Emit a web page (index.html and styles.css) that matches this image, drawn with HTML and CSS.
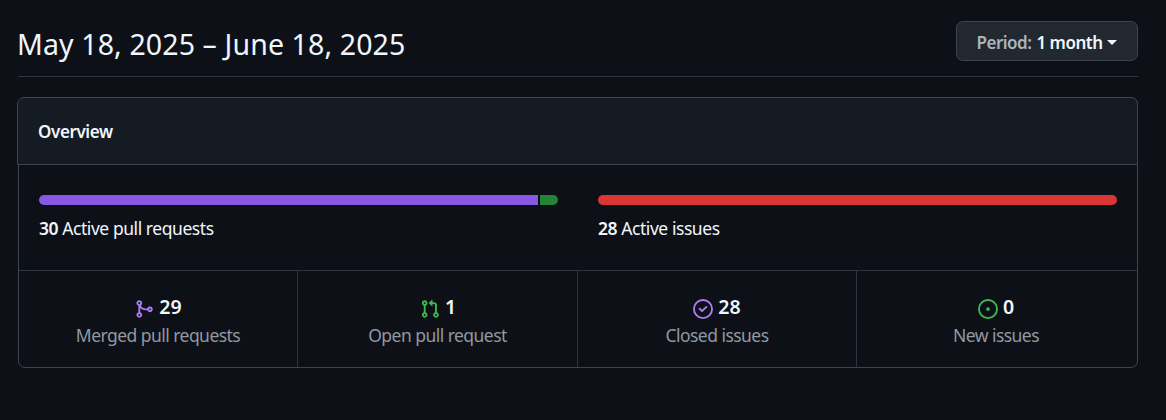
FILE: index.html
```html
<!DOCTYPE html>
<html lang="en">
<head>
<meta charset="utf-8">
<title>Pulse</title>
<link rel="stylesheet" href="styles.css">
</head>
<body>
<main class="page">
  <header class="head">
    <h1 class="title">May 18, 2025 – June 18, 2025</h1>
    <button class="period"><span class="period-label">Period:</span> <span class="period-value">1 month</span><span class="caret"></span></button>
  </header>
  <section class="box">
    <h2 class="box-head">Overview</h2>
    <div class="bars">
      <div class="col">
        <div class="bar"><span class="merged"></span><span class="open"></span></div>
        <p class="label"><b>30</b> Active pull requests</p>
      </div>
      <div class="col">
        <div class="bar"><span class="closed"></span></div>
        <p class="label"><b>28</b> Active issues</p>
      </div>
    </div>
    <ul class="stats">
      <li class="stat">
        <div class="num"><svg class="icon purple" viewBox="0 0 16 16"><path d="M5.45 5.154A4.25 4.25 0 0 0 9.25 7.5h1.378a2.251 2.251 0 1 1 0 1.5H9.25A5.734 5.734 0 0 1 5 7.123v3.505a2.25 2.25 0 1 1-1.5 0V5.372a2.25 2.25 0 1 1 1.95-.218ZM4.25 13.5a.75.75 0 1 0 0-1.5.75.75 0 0 0 0 1.5Zm8.5-4.5a.75.75 0 1 0 0-1.5.75.75 0 0 0 0 1.5ZM5 3.25a.75.75 0 1 0 0 .005V3.25Z"/></svg><b>29</b></div>
        <span class="cap">Merged pull requests</span>
      </li>
      <li class="stat">
        <div class="num num-wide"><svg class="icon green" viewBox="0 0 16 16"><path d="M1.5 3.25a2.25 2.25 0 1 1 3 2.122v5.256a2.251 2.251 0 1 1-1.5 0V5.372A2.25 2.25 0 0 1 1.5 3.25Zm5.677-.177L9.573.677A.25.25 0 0 1 10 .854V2.5h1A2.5 2.5 0 0 1 13.5 5v5.628a2.251 2.251 0 1 1-1.5 0V5a1 1 0 0 0-1-1h-1v1.646a.25.25 0 0 1-.427.177L7.177 3.427a.25.25 0 0 1 0-.354ZM3.75 2.5a.75.75 0 1 0 0 1.5.75.75 0 0 0 0-1.5Zm0 9.5a.75.75 0 1 0 0 1.5.75.75 0 0 0 0-1.5Zm8.25.75a.75.75 0 1 0 1.5 0 .75.75 0 0 0-1.5 0Z"/></svg><b>1</b></div>
        <span class="cap">Open pull request</span>
      </li>
      <li class="stat">
        <div class="num"><svg class="icon purple" viewBox="0 0 16 16"><path d="M11.28 6.78a.75.75 0 0 0-1.06-1.06L7.25 8.69 5.78 7.22a.75.75 0 0 0-1.06 1.06l2 2a.75.75 0 0 0 1.06 0l3.5-3.5Z"/><path d="M16 8A8 8 0 1 1 0 8a8 8 0 0 1 16 0Zm-1.5 0a6.5 6.5 0 1 0-13 0 6.5 6.5 0 0 0 13 0Z"/></svg><b>28</b></div>
        <span class="cap">Closed issues</span>
      </li>
      <li class="stat">
        <div class="num"><svg class="icon green" viewBox="0 0 16 16"><path d="M8 9.5a1.5 1.5 0 1 0 0-3 1.5 1.5 0 0 0 0 3Z"/><path d="M8 0a8 8 0 1 1 0 16A8 8 0 0 1 8 0ZM1.5 8a6.5 6.5 0 1 0 13 0 6.5 6.5 0 0 0-13 0Z"/></svg><b>0</b></div>
        <span class="cap">New issues</span>
      </li>
    </ul>
  </section>
</main>
</body>
</html>
```
FILE: styles.css
```css
* { box-sizing: border-box; }
body {
  margin: 0;
  height: 420px;
  background: #0d1117;
  color: #f0f6fc;
  font: 17.5px/26px "Segoe UI", "Noto Sans", sans-serif;
}
.page { padding: 21px 28px 0 18px; }
.head {
  display: flex;
  justify-content: space-between;
  height: 56px;
  border-bottom: 1px solid #2f353d;
}
.title {
  margin: 0 0 0 -1px;
  font-size: 28.5px;
  line-height: 46px;
  font-weight: 400;
  letter-spacing: 0.12px;
  white-space: nowrap;
}
.period {
  display: flex;
  align-items: center;
  justify-content: center;
  width: 182px;
  height: 40px;
  padding: 3px 0 0;
  border: 1px solid #3d444d;
  border-radius: 7px;
  background: #212830;
  color: #f0f6fc;
  font: 600 17px/24px "Segoe UI", "Noto Sans", sans-serif;
  letter-spacing: -0.5px;
  white-space: nowrap;
}
.period-label { margin-right: 5px; color: #adb4bc; }
.caret { margin-left: 5px; border: 5px solid transparent; border-top-color: #f0f6fc; border-bottom: 0; }
.box {
  height: 271px;
  margin-top: 20px;
  border: 1px solid #3d444d;
  border-radius: 7px;
}
.box-head {
  height: 68px;
  margin: -1px -1px 0 -2px;
  padding: 0 20px;
  border: 1px solid #3d444d;
  border-radius: 7px 7px 0 0;
  background: #151b23;
  font-size: 17px;
  line-height: 68px;
  font-weight: 600;
  letter-spacing: -0.4px;
}
.bars { display: flex; gap: 40px; height: 105px; padding: 30px 20px 0; }
.col { flex: 1; }
.bar { display: flex; gap: 2px; height: 10px; border-radius: 6px; overflow: hidden; }
.merged { flex: 1; background: #8957e5; }
.open { width: 18px; background: #238636; }
.closed { flex: 1; background: #da3633; }
.label { margin: 10px 0 0; letter-spacing: -0.44px; white-space: nowrap; }
b { font-weight: 600; }
.stats {
  display: grid;
  grid-template-columns: 279px 280px 279px 1fr;
  height: 97px;
  margin: 0;
  padding: 0;
  border-top: 1px solid #2f353d;
  list-style: none;
}
.stat { padding-top: 22px; text-align: center; }
.stat:not(:last-child) { border-right: 1px solid #2f353d; }
.stat:last-child { padding-right: 2px; }
.num { display: flex; justify-content: center; align-items: center; gap: 5px; height: 28px; font-size: 19.5px; }
.num-wide { padding-left: 1px; }
.icon { width: 20px; height: 20px; margin-top: 4px; fill: currentColor; }
.purple { color: #ab7df8; }
.green { color: #3fb950; }
.cap { display: block; color: #9198a1; font-size: 17.5px; line-height: 28px; letter-spacing: -0.54px; white-space: nowrap; }
```
